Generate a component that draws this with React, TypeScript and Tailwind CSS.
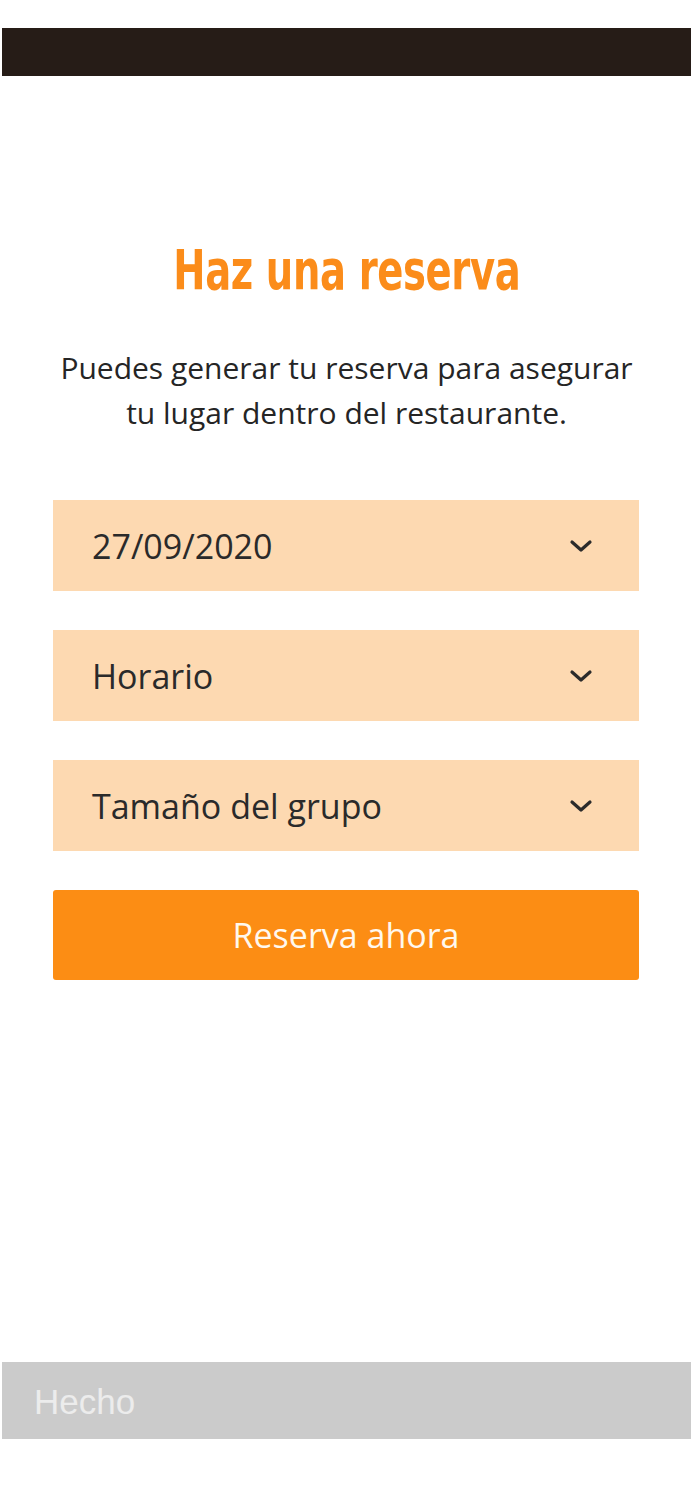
import React from "react";

function Chevron() {
  return (
    <svg width="24" height="14" viewBox="0 0 24 14" fill="none" className="shrink-0">
      <path d="M3 3 L12 11 L21 3" stroke="#2b2b2b" strokeWidth="3.2" strokeLinecap="round" strokeLinejoin="round" />
    </svg>
  );
}

function Select({ label }: { label: string }) {
  return (
    <div className="flex h-[91px] items-center justify-between bg-[#fdd9b1] pl-[39px] pr-[46px]">
      <span className="text-[34px] leading-none text-[#2a2a2a]" style={{ fontFamily: '"Open Sans", sans-serif' }}>
        {label}
      </span>
      <Chevron />
    </div>
  );
}

export default function App() {
  return (
    <div className="relative min-h-[1500px] w-[693px] bg-white" style={{ fontFamily: '"Open Sans", sans-serif' }}>
      <div className="h-[28px]" />
      <div className="mx-[2px] h-[48px] bg-[#261c17]" />
      <div className="mt-[166px] flex justify-center">
        <h1
          className="inline-block origin-center scale-x-[0.765] text-[56px] font-bold leading-none tracking-[-0.5px] text-[#fb8c1a]"
          style={{ fontFamily: '"Liberation Sans Narrow", "DejaVu Sans Condensed", sans-serif' }}
        >
          Haz una reserva
        </h1>
      </div>
      <p className="mt-[47px] text-center text-[30px] leading-[45px] text-[#252525]">
        Puedes generar tu reserva para asegurar
        <br />
        tu lugar dentro del restaurante.
      </p>
      <div className="mx-[53px] mt-[65px] flex w-[586px] flex-col gap-[39px]">
        <Select label="27/09/2020" />
        <Select label="Horario" />
        <Select label="Tamaño del grupo" />
        <button className="h-[90px] rounded-[3px] bg-[#fc8d14] text-[34px] text-[#fff8ee]">Reserva ahora</button>
      </div>
      <div className="absolute left-[2px] right-[2px] top-[1362px] flex h-[77px] items-center bg-[#cbcbcb] pl-[32px]">
        <span className="pt-[4px] text-[35px] text-[#ececec]" style={{ fontFamily: '"Liberation Sans", Arial, sans-serif' }}>
          Hecho
        </span>
      </div>
    </div>
  );
}
